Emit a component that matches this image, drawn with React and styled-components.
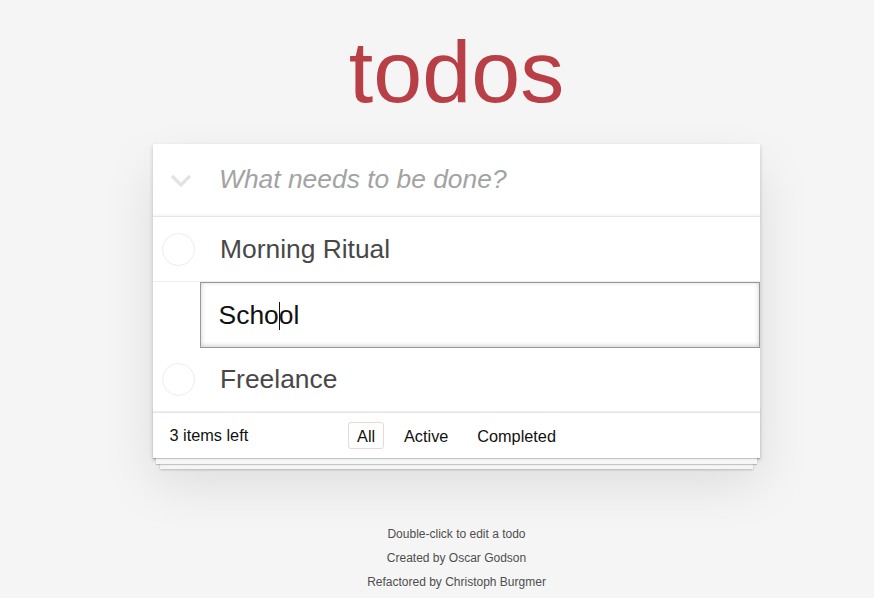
import React from "react";
import styled, { createGlobalStyle } from "styled-components";

const GlobalStyle = createGlobalStyle`
  html, body {
    margin: 0;
    padding: 0;
  }
  body {
    background: #f5f5f5;
    color: #111;
    font-family: "Liberation Sans", Arial, sans-serif;
    -webkit-font-smoothing: antialiased;
  }
`;

const Page = styled.div`
  width: 607px;
  margin: 0 0 0 153px;
  padding-top: 28px;
`;

const Title = styled.h1`
  margin: 0;
  font-size: 88px;
  line-height: 88px;
  font-weight: 400;
  text-align: center;
  color: #b83f45;
`;

const Card = styled.section`
  margin-top: 28px;
  background: #fff;
  box-shadow: 0 2px 4px 0 rgba(0, 0, 0, 0.2), 0 25px 50px 0 rgba(0, 0, 0, 0.1);
`;

const Header = styled.header`
  display: flex;
  align-items: center;
  height: 72px;
  box-shadow: inset 0 -2px 1px rgba(0, 0, 0, 0.03);
`;

const ToggleAll = styled.div`
  width: 66px;
  flex: none;
  display: flex;
  align-items: center;
  padding-left: 17px;
  box-sizing: border-box;
  padding-top: 2px;
`;

const Placeholder = styled.div`
  font-size: 26.4px;
  font-style: italic;
  color: #a3a3a3;
  margin-top: -2px;
`;

const List = styled.ul`
  list-style: none;
  margin: 0;
  padding: 0;
  border-top: 1px solid #e6e6e6;
`;

const Item = styled.li`
  display: flex;
  align-items: ${(p) => (p.editing ? "flex-start" : "center")};
  height: ${(p) => (p.editing ? "65px" : "64px")};
  border-bottom: ${(p) => (p.editing ? "none" : "1px solid #ededed")};
`;

const Circle = styled.span`
  flex: none;
  width: 31px;
  height: 31px;
  margin: 0 25px 0 9px;
  border: 1px solid #ececec;
  border-radius: 50%;
`;

const Label = styled.label`
  font-size: 26.4px;
  line-height: 32px;
  color: #484848;
`;

const Edit = styled.div`
  display: flex;
  align-items: center;
  flex: none;
  box-sizing: border-box;
  width: calc(100% - 47px);
  height: 66px;
  margin-left: 47px;
  padding: 0 17.6px;
  border: 1px solid #999;
  box-shadow: inset 0 -1px 5px 0 rgba(0, 0, 0, 0.2);
  font-size: 26.4px;
  color: #111;
`;

const Caret = styled.span`
  display: inline-block;
  width: 1px;
  height: 28px;
  background: #111;
  vertical-align: -6px;
  margin-right: -1px;
`;

const Footer = styled.footer`
  position: relative;
  display: flex;
  align-items: center;
  height: 45px;
  padding: 0 16.5px;
  border-top: 1px solid #e6e6e6;
  font-size: 16.3px;
  color: #111;

  &::before {
    content: "";
    position: absolute;
    left: 0;
    right: 0;
    bottom: 0;
    height: 50px;
    overflow: hidden;
    box-shadow: 0 1px 1px rgba(0, 0, 0, 0.2), 0 9px 0 -3px #f6f6f6,
      0 10px 1px -3px rgba(0, 0, 0, 0.2), 0 18px 0 -7px #f6f6f6,
      0 19px 2px -7px rgba(0, 0, 0, 0.2);
  }
`;

const Count = styled.span`
  position: relative;
  z-index: 1;
`;

const Filters = styled.ul`
  position: absolute;
  left: 0;
  right: 0;
  top: 0;
  bottom: 0;
  margin: 0;
  padding: 0;
  list-style: none;
  display: flex;
  justify-content: center;
  align-items: center;
  gap: 11.5px;
  z-index: 1;
`;

const Filter = styled.li`
  padding: 3.5px 7.7px;
  line-height: 18px;
  border: 1px solid ${(p) => (p.selected ? "rgba(175, 47, 47, 0.2)" : "transparent")};
  border-radius: 3px;
  color: #111;
`;

const Info = styled.footer`
  margin-top: 64px;
  text-align: center;
  font-size: 12px;
  line-height: 24px;
  color: #4d4d4d;
  text-shadow: 0 1px 0 rgba(255, 255, 255, 0.5);

  p {
    margin: 0;
  }
`;

const Chevron = () => (
  <svg width="22" height="14" viewBox="0 0 22 14">
    <polyline
      points="2,2 11,11 20,2"
      fill="none"
      stroke="#e3e3e3"
      strokeWidth="3.2"
      strokeLinecap="butt"
      strokeLinejoin="miter"
    />
  </svg>
);

export default function App() {
  return (
    <>
      <GlobalStyle />
      <Page>
        <Title>todos</Title>
        <Card>
          <Header>
            <ToggleAll>
              <Chevron />
            </ToggleAll>
            <Placeholder>What needs to be done?</Placeholder>
          </Header>
          <List>
            <Item>
              <Circle />
              <Label>Morning Ritual</Label>
            </Item>
            <Item editing>
              <Edit>
                <span>
                  Scho
                  <Caret />
                  ol
                </span>
              </Edit>
            </Item>
            <Item>
              <Circle />
              <Label>Freelance</Label>
            </Item>
          </List>
          <Footer>
            <Count>3 items left</Count>
            <Filters>
              <Filter selected>All</Filter>
              <Filter>Active</Filter>
              <Filter>Completed</Filter>
            </Filters>
          </Footer>
        </Card>
        <Info>
          <p>Double-click to edit a todo</p>
          <p>Created by Oscar Godson</p>
          <p>Refactored by Christoph Burgmer</p>
        </Info>
      </Page>
    </>
  );
}
